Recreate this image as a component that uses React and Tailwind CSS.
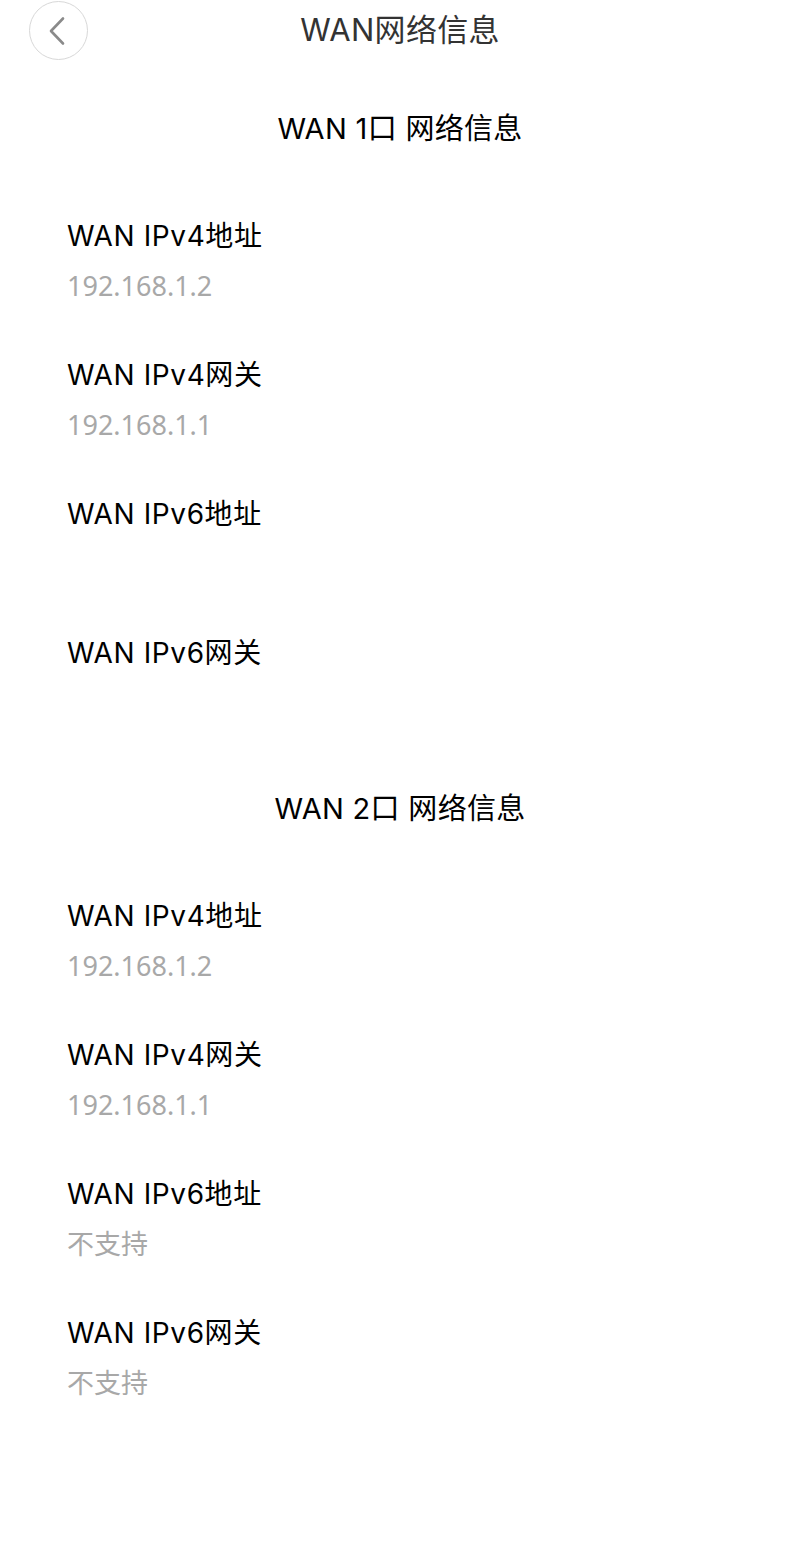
const sections = [
  {
    title: 'WAN 1口 网络信息',
    items: [
      { label: 'WAN IPv4地址', value: '192.168.1.2' },
      { label: 'WAN IPv4网关', value: '192.168.1.1' },
      { label: 'WAN IPv6地址', value: '' },
      { label: 'WAN IPv6网关', value: '' },
    ],
  },
  {
    title: 'WAN 2口 网络信息',
    items: [
      { label: 'WAN IPv4地址', value: '192.168.1.2' },
      { label: 'WAN IPv4网关', value: '192.168.1.1' },
      { label: 'WAN IPv6地址', value: '不支持' },
      { label: 'WAN IPv6网关', value: '不支持' },
    ],
  },
]

const sans = { fontFamily: 'Inter, "Noto Sans CJK SC", sans-serif' }
const valueFont = { fontFamily: '"Noto Sans", "Noto Sans CJK SC", sans-serif' }

function BackIcon() {
  return (
    <svg width="18" height="30" viewBox="0 0 18 30" fill="none">
      <polyline
        points="15,2.5 3,15 15,27.5"
        stroke="#8a8a8a"
        strokeWidth="2.6"
        strokeLinecap="round"
        strokeLinejoin="round"
      />
    </svg>
  )
}

export default function App() {
  return (
    <div className="min-h-[1562px] w-[800px] bg-white" style={sans}>
      <div className="relative flex h-[60px] items-center justify-center">
        <button className="absolute left-[29px] top-[1px] flex h-[59px] w-[59px] items-center justify-center rounded-full border-[1.5px] border-[#d8d8d8] pr-[3px]">
          <BackIcon />
        </button>
        <h1 className="text-[31px] leading-[40px] tracking-[0.3px] text-[#333]">WAN网络信息</h1>
      </div>

      <div className="flex flex-col gap-[66px] pt-[49px]">
        {sections.map((section) => (
          <div key={section.title}>
            <h2 className="text-center text-[29px] leading-[40px] tracking-[0.3px] text-black">
              {section.title}
            </h2>
            <div className="mt-[67px] flex flex-col gap-[49px] pl-[67px]">
              {section.items.map((item) => (
                <div key={item.label} className="flex flex-col gap-[10px]">
                  <div className="text-[28px] leading-[40px] tracking-[0.6px] text-black">{item.label}</div>
                  <div className="h-[40px] text-[27px] leading-[40px] text-[#a8a8a8]" style={valueFont}>
                    {item.value}
                  </div>
                </div>
              ))}
            </div>
          </div>
        ))}
      </div>
    </div>
  )
}
